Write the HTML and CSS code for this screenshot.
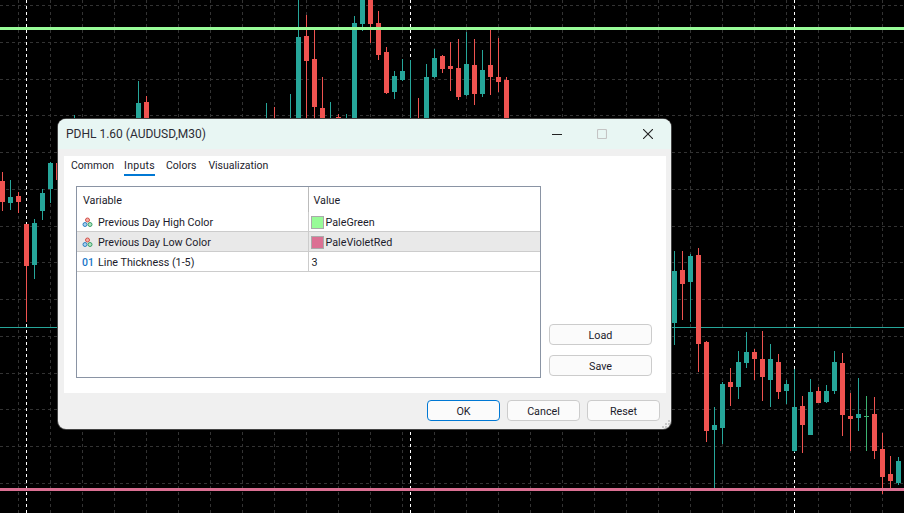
FILE: index.html
```html
<!DOCTYPE html>
<html lang="en">
<head>
  <meta charset="UTF-8" />
  <title>PDHL 1.60 (AUDUSD,M30)</title>
  <link rel="stylesheet" href="styles.css">
</head>
<body>
  <svg class="chart" width="904" height="513" viewBox="0 0 904 513">
    <path class="grid" d="M0 5.5H904M0 42.5H904M0 79.5H904M0 115.5H904M0 152.5H904M0 189.5H904M0 226.5H904M0 262.5H904M0 299.5H904M0 336.5H904M0 373.5H904M0 409.5H904M0 446.5H904M0 483.5H904"/>
    <path class="grid" d="M18.5 0V513M50.5 0V513M82.5 0V513M114.5 0V513M146.5 0V513M178.5 0V513M210.5 0V513M242.5 0V513M274.5 0V513M306.5 0V513M338.5 0V513M370.5 0V513M402.5 0V513M434.5 0V513M466.5 0V513M498.5 0V513M530.5 0V513M562.5 0V513M594.5 0V513M626.5 0V513M658.5 0V513M690.5 0V513M722.5 0V513M754.5 0V513M786.5 0V513M818.5 0V513M850.5 0V513M882.5 0V513"/>
    <path class="period" d="M26.5 0V513M410.5 0V513M794.5 0V513"/>
    <path class="level-mid" d="M0 327.5H904"/>

    <!-- wicks -->
    <path class="wick up" d="M10.5 180V210M34.5 219V279M42.5 189V220M50.5 162V203M74.5 115V119M138.5 81V119M266.5 103V119M290.5 94V119M298.5 0V119M330.5 102V119M346.5 114V119M354.5 16V119M362.5 0V31M394.5 71V99M402.5 59V81M410.5 60V119M426.5 64V119M434.5 49V78M466.5 32V96M482.5 50V97M674.5 251V345M690.5 254V322M714.5 407V488M722.5 382V444M738.5 351V399M746.5 332V368M770.5 344V407M786.5 380V404M794.5 369V452M810.5 379V435M826.5 385V403M834.5 351V394M858.5 378V431M898.5 457V485"/>
    <path class="wick down" d="M2.5 172V211M18.5 192V213M26.5 224V322M146.5 96V119M274.5 107V119M306.5 15V119M314.5 30V119M322.5 77V119M338.5 114V119M370.5 0V43M378.5 11V60M386.5 47V94M418.5 98V119M442.5 55V73M450.5 42V91M458.5 39V100M474.5 39V105M490.5 30V95M498.5 38V92M506.5 77V119M682.5 251V320M698.5 248V372M706.5 341V442M730.5 368V406M754.5 349V380M762.5 331V401M778.5 354V399M802.5 396V453M818.5 387V403M842.5 353V436M850.5 393V451M874.5 397V459M882.5 433V494M890.5 456V488"/>
    <path class="wick doji" d="M866.5 396V451M864 416.5H869"/>

    <!-- bodies -->
    <path class="body up" d="M10.5 197V203M34.5 223V265M42.5 193V211M50.5 163V189M138.5 103V119M290.5 118V119M298.5 37V119M330.5 118V119M346.5 118V119M354.5 23V119M362.5 0V24M394.5 76V92M402.5 71V80M426.5 77V119M434.5 58V77M466.5 64V95M482.5 70V94M674.5 271V323M690.5 256V282M714.5 425V430M722.5 384V428M738.5 362V387M746.5 352V363M770.5 359V380M786.5 384V391M794.5 407V451M810.5 392V435M826.5 391V402M834.5 362V391M858.5 414V418M898.5 461V483"/>
    <path class="body down" d="M2.5 181V202M18.5 196V202M26.5 224V266M58.5 163V180M146.5 102V119M306.5 36V61M314.5 59V107M322.5 108V119M338.5 117V119M370.5 0V24M378.5 23V55M386.5 52V93M442.5 56V69M450.5 66V69M458.5 68V97M474.5 65V94M490.5 65V77M498.5 77V82M506.5 80V119M682.5 270V284M698.5 255V344M706.5 342V431M730.5 382V387M754.5 352V359M762.5 359V377M778.5 362V392M802.5 406V425M818.5 391V403M842.5 363V415M850.5 416V419M874.5 414V451M882.5 449V477M890.5 474V481"/>

    <path class="level-high" d="M0 28.5H904"/>
    <path class="level-low" d="M0 489.5H904"/>
  </svg>

  <div class="dialog">
    <div class="titlebar">
      <span class="title">PDHL 1.60 (AUDUSD,M30)</span>
      <div class="window-btns">
        <svg width="10" height="10" viewBox="0 0 10 10"><path class="win-icon" d="M0 5.5H10"/></svg>
        <svg width="10" height="10" viewBox="0 0 10 10"><rect class="win-icon off" x="0.5" y="0.5" width="9" height="9" rx="1"/></svg>
        <svg class="close-icon" width="10" height="10" viewBox="0 0 10 10"><path class="win-icon" d="M0 0L10 10M10 0L0 10"/></svg>
      </div>
    </div>

    <div class="content">
      <div class="tabs">
        <span class="tab">Common</span>
        <span class="tab active">Inputs</span>
        <span class="tab">Colors</span>
        <span class="tab">Visualization</span>
      </div>

      <div class="panel">
        <div class="table-box">
          <table class="inputs">
            <thead>
              <tr><th class="col-var">Variable</th><th class="col-val">Value</th></tr>
            </thead>
            <tbody>
              <tr>
                <td class="col-var"><span class="var-name">
                  <svg class="row-icon" width="11" height="11" viewBox="0 0 11 11"><circle class="dot-r" cx="5.5" cy="3" r="2"/><circle class="dot-b" cx="3" cy="7.5" r="2"/><circle class="dot-g" cx="8" cy="7.5" r="2"/></svg>
                  Previous Day High Color</span></td>
                <td><span class="swatch pale-green"></span>PaleGreen</td>
              </tr>
              <tr class="selected">
                <td class="col-var"><span class="var-name">
                  <svg class="row-icon" width="11" height="11" viewBox="0 0 11 11"><circle class="dot-r" cx="5.5" cy="3" r="2"/><circle class="dot-b" cx="3" cy="7.5" r="2"/><circle class="dot-g" cx="8" cy="7.5" r="2"/></svg>
                  Previous Day Low Color</span></td>
                <td><span class="swatch pale-violet"></span>PaleVioletRed</td>
              </tr>
              <tr>
                <td class="col-var"><span class="var-name"><span class="int-icon">01</span>Line Thickness (1-5)</span></td>
                <td>3</td>
              </tr>
            </tbody>
          </table>
        </div>
        <div class="side-btns">
          <button class="btn wide">Load</button>
          <button class="btn wide">Save</button>
        </div>
      </div>
    </div>

    <div class="footer">
      <button class="btn primary">OK</button>
      <button class="btn">Cancel</button>
      <button class="btn">Reset</button>
    </div>

    <svg class="grip" width="8" height="8" viewBox="0 0 8 8">
      <path d="M6 0h2v2H6zM3 3h2v2H3zM6 3h2v2H6zM0 6h2v2H0zM3 6h2v2H3zM6 6h2v2H6z"/>
    </svg>
  </div>
</body>
</html>
```

FILE: styles.css
```css
body {
  margin: 0;
  width: 904px;
  height: 513px;
  overflow: hidden;
  background: #000;
  font-family: Roboto, "Noto Sans", sans-serif;
  font-size: 10.75px;
  color: #1c1c2c;
}

/* chart */
.chart { position: absolute; left: 0; top: 0; display: block; }
.chart path { fill: none; }
.grid { stroke: #333; stroke-width: 1; stroke-dasharray: 3 3; }
.period { stroke: #fff; stroke-width: 1; stroke-dasharray: 3 3; }
.wick { stroke-width: 1; }
.body { stroke-width: 5; }
.up { stroke: #26a69a; }
.down { stroke: #ef5350; }
.doji { stroke: #3cb371; }
.level-mid { stroke: #26a69a; stroke-width: 1; }
.level-high { stroke: #98fb98; stroke-width: 3; }
.level-low { stroke: #db7093; stroke-width: 3; }

/* dialog */
.dialog {
  position: absolute;
  left: 58px;
  top: 119px;
  width: 613px;
  height: 310px;
  display: flex;
  flex-direction: column;
  background: #f0f0f0;
  border-radius: 8px;
  box-shadow: 0 0 0 1px #444;
  overflow: hidden;
}
.titlebar {
  height: 30px;
  flex: none;
  display: flex;
  align-items: center;
  justify-content: space-between;
  padding: 0 18px 0 8px;
  background: #e8f6f3;
}
.title { font-size: 12px; color: #2c2c34; }
.window-btns { display: flex; gap: 35px; }
.window-btns svg { display: block; }
.close-icon { margin-left: 1px; }
.win-icon { fill: none; stroke: #222; stroke-width: 1.1; }
.win-icon.off { stroke: #c4c4c4; }

.content {
  height: 237px;
  flex: none;
  margin: 7px 5px 0 6px;
  background: #fff;
  box-sizing: border-box;
}
.tabs {
  display: flex;
  gap: 12px;
  padding-left: 7px;
  height: 20px;
  font-size: 10.5px;
}
.tab {
  height: 18px;
  line-height: 20px;
}
.tab.active {
  margin: 0 -1px 0 -2px;
  letter-spacing: 0.3px;
  border-bottom: 2px solid #0078d4;
}

.panel {
  display: flex;
  margin-top: 10px;
  padding-left: 12px;
}
.table-box {
  width: 465px;
  height: 192px;
  box-sizing: border-box;
  border: 1px solid #8a94a4;
}
.inputs {
  width: 100%;
  table-layout: fixed;
  border-collapse: collapse;
}
.inputs th {
  height: 23px;
  padding: 2px 5px 0 6px;
  font-weight: normal;
  text-align: left;
}
.inputs th.col-val { padding-left: 5px; }
.inputs td {
  height: 17px;
  padding: 2px 3px 0;
  border-bottom: 1px solid #ccc;
  white-space: nowrap;
}
.inputs .col-var { width: 231px; box-sizing: border-box; border-right: 1px solid #ccc; }
.inputs th.col-var { border-right-color: #bbb; }
.selected td { background: #e9e9e9; }
.var-name { display: flex; align-items: center; padding-left: 2px; }
.row-icon { margin-right: 5px; flex: none; }
.row-icon circle { stroke-width: 1; }
.dot-r { fill: #f4b0a8; stroke: #d0504a; }
.dot-b { fill: #a8d0ee; stroke: #2f7fc0; }
.dot-g { fill: #b0e4c0; stroke: #3a9f68; }
.int-icon {
  width: 16px;
  flex: none;
  color: #1976c8;
  font-size: 10.5px;
  font-weight: 500;
}
.swatch {
  display: inline-block;
  width: 11px;
  height: 11px;
  border: 1px solid #aaa;
  margin: 0 2px 0 -1px;
  vertical-align: -3px;
}
.pale-green { background: #98fb98; }
.pale-violet { background: #db7093; }

.side-btns {
  display: flex;
  flex-direction: column;
  justify-content: flex-end;
  gap: 10px;
  margin-left: 8px;
  padding-bottom: 2px;
  height: 190px;
  box-sizing: content-box;
}
.btn {
  width: 73px;
  height: 21px;
  padding: 2px 0 0;
  background: #fbfbfb;
  border: 1px solid #ccc;
  border-radius: 4px;
  font: inherit;
  color: inherit;
}
.btn.wide { width: 103px; }
.btn.primary { border-color: #0078d4; }

.footer {
  flex: 1;
  display: flex;
  justify-content: flex-end;
  gap: 7px;
  padding: 7px 11px 0 0;
}
.grip { position: absolute; right: 1px; bottom: 1px; }
.grip path { fill: #c8c8c8; }
```
